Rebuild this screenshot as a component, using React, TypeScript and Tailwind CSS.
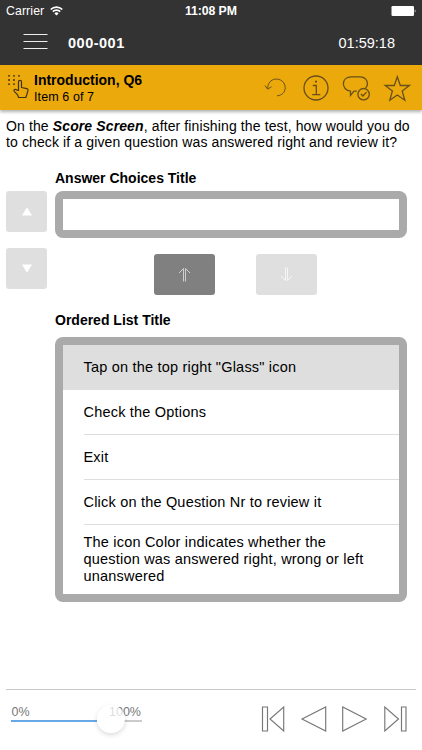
import React, { useState } from 'react';

const orderedItems = [
  'Tap on the top right "Glass" icon',
  'Check the Options',
  'Exit',
  'Click on the Question Nr to review it',
  'The icon Color indicates whether the question was answered right, wrong or left unanswered',
];

const StatusBar = () => (
  <div className="relative flex h-[22px] items-center justify-between pl-[6px] pr-[5px] text-[12.3px] leading-[22px]">
    <div className="flex items-center gap-[6px]">
      <span className="tracking-[0.1px]">Carrier</span>
      <svg width="13" height="10" viewBox="0 0 13 10" fill="none" stroke="#fff" strokeWidth="1.7">
        <path d="M0.7 3.5a8.2 8.2 0 0 1 11.6 0" />
        <path d="M2.8 5.7a5.2 5.2 0 0 1 7.4 0" />
        <path d="M4.4 7.4a3 3 0 0 1 4.2 0L6.5 9.5Z" fill="#fff" stroke="none" />
      </svg>
    </div>
    <span className="absolute left-[185px] top-0 whitespace-nowrap font-bold tracking-[-0.1px]">11:08 PM</span>
    <svg width="26" height="12" viewBox="0 0 26 12" fill="#fff">
      <rect x="0.5" y="1" width="22.5" height="10" rx="1.3" />
      <path d="M23.8 4.2q1.7 1.8 0 3.6Z" />
    </svg>
  </div>
);

const ItemBar = () => (
  <div className="relative z-10 flex h-[45px] bg-[#eca90c] shadow-[0_2px_3px_rgba(0,0,0,0.3)]">
    <svg className="mt-[8px] ml-[6px] h-[28px] w-[24px] shrink-0" viewBox="0 0 24 28" fill="none" stroke="#403315" strokeWidth="1.2" strokeLinejoin="round">
      <path d="M2 2.8h13M2 7h9M2 11.2h9" strokeWidth="1.3" strokeDasharray="2 3" />
      <path d="M12.5 17.5V8.8c0-2 3-2 3 0v5.7l5.3 1.2c1 .2 1.3.8 1.2 1.7l-1.2 4.3-1 2.8h-7.2l-1-2.6-3.1-3.2c-1.4-1.7.1-3 1.5-2.1Z" />
    </svg>
    <div className="ml-[4px] mt-[7px] text-black">
      <h1 className="text-[14px] font-bold leading-[17px]">Introduction, Q6</h1>
      <p className="text-[12.5px] leading-[16px] tracking-[0.1px]">Item 6 of 7</p>
    </div>
    <svg className="ml-auto mr-[11px] mt-[8px] h-[30px] w-[148px]" viewBox="0 0 148 30" fill="none" stroke="#68501a" strokeWidth="1.15">
      {/* Undo */}
      <path d="M4.7 15.5C5 2.3 22.2 3.8 22.2 14.7c0 4.6-3.3 7.8-8.3 8.1" strokeWidth="1" />
      <path d="M2 12.5l2.7 3.7 3.8-2.5" strokeWidth="1" />
      {/* Info */}
      <circle cx="53" cy="15" r="12" strokeWidth="1.3" />
      <path d="M49.8 12.5h3.5v9.2M49.2 21.7h8.1" strokeWidth="1.3" />
      <circle cx="53" cy="8.7" r="1.1" fill="#68501a" stroke="none" />
      {/* Comment */}
      <path d="M93.8 18.2H91l-3.5 4.3v-4.4c-9.5-1-9.7-14.2.8-14.2h8.2c7.8 0 9.8 7 6 11.2" strokeWidth="1.3" />
      <circle cx="100.6" cy="21.2" r="5.7" strokeWidth="1.3" />
      <path d="M97.9 21l2 2 3.6-3.9" strokeWidth="1.3" />
      {/* Favourite */}
      <path d="M134.3 3.8l3 8.7h9.1l-7.2 5.5 2.6 9.2-7.5-5.2-7.5 5.2 2.6-9.2-7.2-5.5h9.1Z" strokeWidth="1.3" />
    </svg>
  </div>
);

const MoveButton = ({ up }: { up?: boolean }) => (
  <button className="flex h-[41px] w-[41px] items-center justify-center rounded-[3px] bg-[#dfdfdf]">
    <svg width="10" height="9" viewBox="0 0 10 9" fill="#fff">
      <path d={up ? 'M5 0.3L10 8.5H0Z' : 'M5 8.7L10 0.5H0Z'} />
    </svg>
  </button>
);

const DoubleArrow = ({ up }: { up?: boolean }) => (
  <svg className={up ? '' : 'rotate-180'} width="15" height="15" viewBox="0 0 15 15" fill="none" stroke={up ? '#cfcfcf' : '#f6f6f6'}>
    <path d="M2 6L6.5 1.5V14.5M13 6L8.5 1.5V14.5" />
  </svg>
);

const Footer = ({ progress }: { progress: number }) => (
  <footer className="mx-[6px] mt-auto flex h-[61px] border-t border-[#c7c7c7]">
    <div className="relative ml-[5px] mt-[14px] h-[32px] w-[131px]">
      <div className="flex justify-between pl-[0.5px] pr-[1px] text-[12.5px] leading-[16px] text-[#777]">
        <span>0%</span>
        <span>100%</span>
      </div>
      <div className="h-[2px] bg-[#cbcbcb]">
        <div className="h-full bg-[#68a8e8]" style={{ width: `${progress}%` }} />
      </div>
      <div
        className="absolute top-px h-[28px] w-[28px] -translate-x-1/2 rounded-full bg-white/75 shadow-[0_2px_5px_rgba(0,0,0,0.15)]"
        style={{ left: `${progress}%` }}
      />
      <div className="absolute left-[86px] top-[15px] h-[4px] w-[27px] bg-white" />
    </div>
    <svg className="ml-auto mr-[8px] mt-[15px]" width="147" height="28" viewBox="0 0 147 28" fill="none" stroke="#777" strokeWidth="1.15">
      <path d="M1.5 2h5v24h-5ZM22.7 2v24L9 14Z" />
      <path d="M64.7 2v24L41 14Z" />
      <path d="M81.7 2v24L105.2 14Z" />
      <path d="M123.8 2v24L137.5 14ZM140.5 2h4.5v24h-4.5Z" />
    </svg>
  </footer>
);

export default function App() {
  const [selected, setSelected] = useState(0);

  return (
    <div className="flex h-[750px] w-[422px] flex-col overflow-hidden bg-white font-['Liberation_Sans',Arial,sans-serif] text-black">
      <header className="h-[65px] shrink-0 bg-[#333] text-white">
        <StatusBar />
        <div className="flex h-[43px] items-center pl-[23px] pr-[27px]">
          <svg className="mb-[4px]" width="25" height="15" viewBox="0 0 25 15" stroke="#eee" strokeWidth="1">
            <path d="M0.5 0.5h24M0.5 7.5h24M0.5 14.5h24" />
          </svg>
          <span className="ml-[20px] text-[14.5px] font-bold tracking-[0.5px]">000-001</span>
          <span className="ml-auto text-[14.5px]">01:59:18</span>
        </div>
      </header>
      <ItemBar />

      <main className="pl-[6px]">
        <p className="mt-[8px] whitespace-nowrap text-[14px] leading-[16.3px] tracking-[0.12px]">
          On the <b><i>Score Screen</i></b>, after finishing the test, how would you do
          <br />
          to check if a given question was answered right and review it?
        </p>

        <div className="mt-[40.4px] flex gap-[8px]">
          <div className="flex flex-col gap-[16px]">
            <MoveButton up />
            <MoveButton />
          </div>
          <div className="-mt-[24px] w-[352px]">
            <h2 className="mb-[2px] text-[14px] font-bold leading-[22px]">Answer Choices Title</h2>
            <div className="h-[47px] rounded-[8px] bg-[#aaa] p-[8px]">
              <div className="h-full bg-white" />
            </div>
            <div className="mt-[16px] flex gap-[41px] pl-[99px]">
              <button className="flex h-[41px] w-[61px] items-center justify-center rounded-[3px] bg-[#808080]">
                <DoubleArrow up />
              </button>
              <button className="flex h-[41px] w-[61px] items-center justify-center rounded-[3px] bg-[#dfdfdf]">
                <DoubleArrow />
              </button>
            </div>
            <h2 className="mt-[14px] text-[14px] font-bold leading-[22px]">Ordered List Title</h2>
            <div className="mt-[6px] h-[265px] rounded-[8px] bg-[#aaa] p-[8px]">
              <ul className="h-full bg-white text-[14.5px] leading-[17px] tracking-[0.2px]">
                {orderedItems.map((item, index) => (
                  <li
                    key={item}
                    onClick={() => setSelected(index)}
                    className={`pl-[20.5px] ${index === selected ? 'bg-[#dedede]' : ''}`}
                  >
                    <div
                      className={`flex items-center ${index === orderedItems.length - 1
                        ? 'h-[69px] w-[300px]'
                        : 'h-[45px] border-b border-[#dedede] pt-px'
                        }`}
                    >
                      {item}
                    </div>
                  </li>
                ))}
              </ul>
            </div>
          </div>
        </div>
      </main>

      <Footer progress={76} />
    </div>
  );
}
